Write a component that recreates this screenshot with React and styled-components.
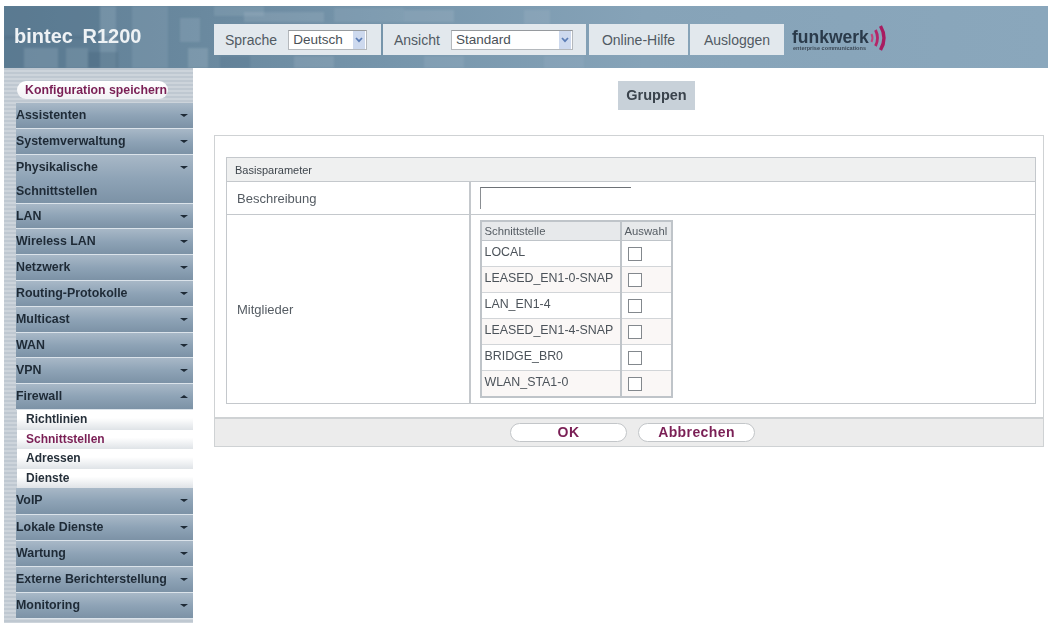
import React from "react";
import styled, { createGlobalStyle } from "styled-components";

const Global = createGlobalStyle`
  html, body { margin: 0; padding: 0; background: #fff; height: 100%; overflow: hidden; }
  body { font-family: "Liberation Sans", Arial, sans-serif; font-size: 11px; color: #333; }
`;

const Page = styled.div`
  width: 1053px;
  height: 623px;
  box-sizing: border-box;
  padding: 6px 5px 0 4px;
  display: flex;
  flex-direction: column;
  overflow: hidden;
  filter: blur(0.55px);
`;

const Header = styled.header`
  position: relative;
  height: 62px;
  flex: none;
  display: flex;
  align-items: flex-start;
  box-sizing: border-box;
  padding-top: 18px;
  overflow: hidden;
  background: linear-gradient(90deg, #5f7e95 0, #6a899f 200px, #7796ac 400px, #86a3b8 640px, #8aa7bc 100%);
`;

const Texture = styled.svg`
  position: absolute;
  left: 0;
  top: 0;
  width: 800px;
  height: 62px;
  filter: blur(1.2px);
`;

const Brand = styled.div`
  position: relative;
  width: 210px;
  flex: none;
  box-sizing: border-box;
  padding: 0 0 0 10px;
  font-size: 20px;
  font-weight: 700;
  line-height: 24px;
  color: #eef2f5;
  word-spacing: 4px;
  white-space: nowrap;
`;

const ToolGroup = styled.div`
  position: relative;
  height: 31px;
  display: flex;
  align-items: center;
  gap: ${(p) => p.$gap || 0}px;
  box-sizing: border-box;
  width: ${(p) => p.$w}px;
  margin-right: ${(p) => p.$mr || 0}px;
  padding-left: ${(p) => p.$pl || 0}px;
  justify-content: ${(p) => (p.$center ? "center" : "flex-start")};
  background: #e2e8ed;
  font-size: 14px;
  color: #515a63;
  white-space: nowrap;
`;

const SelectBox = styled.div`
  position: relative;
  width: ${(p) => p.$w}px;
  height: 20px;
  flex: none;
`;

const NativeSelect = styled.select`
  appearance: none;
  width: 100%;
  height: 100%;
  box-sizing: border-box;
  border: 1px solid #b4b8bc;
  border-top-color: #969a9e;
  background: #fff;
  padding: 0 0 0 4px;
  margin: 0;
  border-radius: 0;
  font: 13.5px "Liberation Sans", Arial, sans-serif;
  color: #4a5158;
`;

const Arrow = styled.span`
  position: absolute;
  right: 2px;
  top: 1px;
  bottom: 1px;
  width: 12px;
  background: #cdd9ee;
  display: flex;
  align-items: center;
  justify-content: center;
`;

const Logo = styled.div`
  margin-left: 8px;
  display: flex;
  align-items: center;
  height: 31px;
  position: relative;
`;

const LogoWord = styled.div`
  font-size: 17.5px;
  font-weight: 700;
  line-height: 15px;
  color: #2a3a4a;
  margin-top: -4px;
`;

const LogoTag = styled.div`
  position: absolute;
  left: 1px;
  top: 22px;
  font-size: 5.6px;
  font-weight: 700;
  line-height: 5px;
  color: #3d4a57;
  white-space: nowrap;
`;

const Body = styled.div`
  flex: 1;
  display: flex;
  min-height: 0;
`;

const Sidebar = styled.nav`
  width: 189px;
  flex: none;
  box-sizing: border-box;
  padding: 13px 0 0 12px;
  background: repeating-linear-gradient(180deg, #bfc8d1 0 2px, #cdd4db 2px 4px);
`;

const SaveButton = styled.div`
  height: 18px;
  width: 151px;
  margin: 0 0 4px 1px;
  box-sizing: border-box;
  padding-left: 8px;
  border-radius: 9px;
  background: linear-gradient(180deg, #fff, #f1f2f5);
  font-weight: 700;
  font-size: 12.3px;
  line-height: 18px;
  color: #7a1f55;
  white-space: nowrap;
`;

const MenuItem = styled.div`
  min-height: ${(p) => (p.$tall ? "26.2px" : "25.8px")};
  box-sizing: border-box;
  display: flex;
  justify-content: space-between;
  border-bottom: 1px solid #dbe3ea;
  padding: 0 5px 0 0;
  background: linear-gradient(180deg, #a8b8c7 0, #8ea3b6 50%, #7c92a6 100%);
  font-weight: 700;
  font-size: 12.4px;
  line-height: 24px;
  color: #1e2a36;
  white-space: nowrap;
`;

const MenuLabel = styled.span`
  display: block;
`;

const Caret = styled.span`
  width: 0;
  height: 0;
  margin-top: 11px;
  border-left: 4px solid transparent;
  border-right: 4px solid transparent;
  ${(p) => (p.$up ? "border-bottom: 3px solid #1e2a36;" : "border-top: 3px solid #1e2a36;")}
`;

const SubItem = styled.div`
  height: 19.6px;
  box-sizing: border-box;
  margin-left: 1px;
  padding-left: 9px;
  background: linear-gradient(180deg, #fff 0, #fff 40%, #dfe3e7 100%);
  font-weight: 700;
  font-size: 12px;
  line-height: 19px;
  color: ${(p) => (p.$active ? "#7a1f55" : "#26303a")};
`;

const Main = styled.main`
  flex: 1;
  min-width: 0;
  box-sizing: border-box;
  padding: 13px 0 0 21px;
  display: flex;
  flex-direction: column;
`;

const TabRow = styled.div`
  display: flex;
  padding-left: 404px;
`;

const Tab = styled.div`
  width: 77px;
  height: 29px;
  background: #c8d1d9;
  font-weight: 700;
  font-size: 14.5px;
  line-height: 29px;
  text-align: center;
  color: #3a434c;
`;

const Panel = styled.section`
  margin: 25px 4px 0 0;
  border: 1px solid #cfd2d4;
  display: flex;
  flex-direction: column;
`;

const PanelBody = styled.div`
  padding: 21px 7px 13px 11px;
`;

const FormTable = styled.table`
  width: 100%;
  border-collapse: collapse;
  border: 1px solid #c4c8cc;
  table-layout: fixed;
`;

const LabelCol = styled.col`
  width: 243px;
`;

const SectionCell = styled.th`
  height: 23px;
  padding: 0 0 0 8px;
  text-align: left;
  font-weight: 400;
  font-size: 11px;
  color: #3f464d;
  background: #eff0f0;
  border-bottom: 1px solid #c4c8cc;
`;

const LabelCell = styled.td`
  padding: 0 0 0 10px;
  font-size: 13px;
  color: #555c63;
  border-bottom: 1px solid #c4c8cc;
  border-right: 2px solid #c4c8cc;
  height: ${(p) => p.$h}px;
`;

const ValueCell = styled.td`
  padding: ${(p) => p.$pad};
  vertical-align: top;
  border-bottom: 1px solid #c4c8cc;
`;

const TextInput = styled.input`
  display: block;
  width: 151px;
  height: 22px;
  box-sizing: border-box;
  padding: 0;
  background: #fff;
  border: 0;
  border-top: 1px solid #6d7176;
  border-left: 1px solid #8a8e92;
`;

const MemberTable = styled.table`
  border-collapse: collapse;
  border: 2px solid #bfc4c9;
  width: 193px;
  table-layout: fixed;
`;

const MemberHead = styled.th`
  height: 18px;
  padding: 0 0 0 3px;
  text-align: left;
  font-weight: 400;
  font-size: 11.3px;
  color: #555c63;
  background: #e7e9eb;
  border-bottom: 1px solid #bfc4c9;
  border-right: ${(p) => (p.$last ? "0" : "2px solid #bfc4c9")};
  width: ${(p) => (p.$last ? "auto" : "135px")};
  white-space: nowrap;
`;

const MemberName = styled.td`
  height: 22px;
  padding: 0 0 3px 3px;
  font-size: 12.4px;
  white-space: nowrap;
  color: #4c535a;
  background: ${(p) => (p.$odd ? "#faf7f6" : "#fff")};
  border-bottom: 1px solid #d2d5d8;
  border-right: 2px solid #bfc4c9;
`;

const MemberCheck = styled.td`
  padding: 0 0 0 6px;
  background: ${(p) => (p.$odd ? "#faf7f6" : "#fff")};
  border-bottom: 1px solid #d2d5d8;
`;

const Box = styled.span`
  display: block;
  width: 14px;
  height: 14px;
  box-sizing: border-box;
  border: 1px solid #83888d;
  background: #fff;
`;

const Footer = styled.div`
  height: 29px;
  box-sizing: border-box;
  border-top: 2px solid #cfd2d4;
  background: #ececec;
  display: flex;
  justify-content: center;
  align-items: center;
  gap: 11px;
  padding-left: 7px;
`;

const PillButton = styled.button`
  width: ${(p) => p.$w}px;
  height: 19px;
  margin: 0;
  padding: 0;
  border: 1px solid #c3c6c9;
  border-radius: 10px;
  background: #fff;
  font: 700 14px "Liberation Sans", Arial, sans-serif;
  line-height: 17px;
  letter-spacing: 0.4px;
  color: #7a1f55;
`;

const menuBefore = [
  ["Assistenten"],
  ["Systemverwaltung"],
  ["Physikalische", "Schnittstellen"],
  ["LAN"],
  ["Wireless LAN"],
  ["Netzwerk"],
  ["Routing-Protokolle"],
  ["Multicast"],
  ["WAN"],
  ["VPN"],
];
const menuAfter = ["VoIP", "Lokale Dienste", "Wartung", "Externe Berichterstellung", "Monitoring"];
const subs = ["Richtlinien", "Schnittstellen", "Adressen", "Dienste"];
const members = ["LOCAL", "LEASED_EN1-0-SNAP", "LAN_EN1-4", "LEASED_EN1-4-SNAP", "BRIDGE_BR0", "WLAN_STA1-0"];

const blocks = [
  [0, 0, 96, 62, "#4f6f87", 0.3], [96, 0, 16, 62, "#9db4c4", 0.3], [128, 0, 36, 62, "#a9bccb", 0.18],
  [20, 42, 34, 20, "#9fb5c4", 0.28], [62, 42, 22, 20, "#a9bccb", 0.2], [84, 46, 30, 16, "#3f5f78", 0.28],
  [176, 12, 20, 24, "#a9bccb", 0.24], [184, 42, 20, 20, "#b3c5d2", 0.26], [210, 0, 50, 10, "#a5b9c8", 0.22],
  [240, 6, 80, 10, "#c0cfda", 0.18], [330, 2, 70, 14, "#a9bdcc", 0.2], [216, 50, 30, 12, "#4f6f87", 0.28],
  [290, 50, 40, 12, "#b3c5d2", 0.2], [400, 4, 50, 12, "#c0cfda", 0.18], [420, 50, 40, 12, "#a9bdcc", 0.2],
  [520, 4, 26, 14, "#c0cfda", 0.14], [540, 50, 40, 12, "#b3c5d2", 0.12], [0, 30, 130, 3, "#33536b", 0.15],
];

const Chevron = () => (
  <svg width="8" height="6" viewBox="0 0 8 6" aria-hidden="true">
    <path d="M1 1 L4 4.2 L7 1" fill="none" stroke="#5b7db5" strokeWidth="1.7" />
  </svg>
);

const Select = ({ w, value }) => (
  <SelectBox $w={w}>
    <NativeSelect defaultValue={value}>
      <option>{value}</option>
    </NativeSelect>
    <Arrow>
      <Chevron />
    </Arrow>
  </SelectBox>
);

export default function App() {
  return (
    <Page>
      <Global />
      <Header>
        <Texture viewBox="0 0 800 62" aria-hidden="true">
          {blocks.map(([x, y, w, h, fill, o]) => (
            <rect key={`${x}-${y}`} x={x} y={y} width={w} height={h} fill={fill} opacity={o} />
          ))}
        </Texture>
        <Brand>bintec R1200</Brand>
        <ToolGroup $w={167} $mr={2} $pl={11} $gap={11}>
          Sprache
          <Select w={79} value="Deutsch" />
        </ToolGroup>
        <ToolGroup $w={203} $mr={3} $pl={11} $gap={11}>
          Ansicht
          <Select w={122} value="Standard" />
        </ToolGroup>
        <ToolGroup $w={99} $mr={2} $center>Online-Hilfe</ToolGroup>
        <ToolGroup $w={94} $center>Ausloggen</ToolGroup>
        <Logo>
          <LogoWord>funkwerk</LogoWord>
          <LogoTag>enterprise communications</LogoTag>
          <svg width="20" height="28" viewBox="0 0 20 28" aria-hidden="true" style={{ marginTop: -3, marginLeft: 1 }}>
            <path d="M1.5 10 Q3.5 14 1.5 18" fill="none" stroke="#c0447c" strokeWidth="2" />
            <path d="M5.5 6 Q9.5 14 5.5 22" fill="none" stroke="#b42669" strokeWidth="2.8" />
            <path d="M10.5 2 Q17.5 14 10.5 26" fill="none" stroke="#a81c60" strokeWidth="3.4" />
          </svg>
        </Logo>
      </Header>
      <Body>
        <Sidebar>
          <SaveButton>Konfiguration speichern</SaveButton>
          {menuBefore.map((lines) => (
            <MenuItem key={lines[0]}>
              <div>
                {lines.map((l) => (
                  <MenuLabel key={l}>{l}</MenuLabel>
                ))}
              </div>
              <Caret />
            </MenuItem>
          ))}
          <MenuItem>
            <MenuLabel>Firewall</MenuLabel>
            <Caret $up />
          </MenuItem>
          {subs.map((s, i) => (
            <SubItem key={s} $active={i === 1}>{s}</SubItem>
          ))}
          {menuAfter.map((m) => (
            <MenuItem key={m} $tall>
              <MenuLabel>{m}</MenuLabel>
              <Caret />
            </MenuItem>
          ))}
        </Sidebar>
        <Main>
          <TabRow>
            <Tab>Gruppen</Tab>
          </TabRow>
          <Panel>
            <PanelBody>
              <FormTable>
                <colgroup>
                  <LabelCol />
                  <col />
                </colgroup>
                <thead>
                  <tr>
                    <SectionCell colSpan={2}>Basisparameter</SectionCell>
                  </tr>
                </thead>
                <tbody>
                  <tr>
                    <LabelCell $h={32}>Beschreibung</LabelCell>
                    <ValueCell $pad="5px 0 0 9px">
                      <TextInput type="text" />
                    </ValueCell>
                  </tr>
                  <tr>
                    <LabelCell $h={187}>Mitglieder</LabelCell>
                    <ValueCell $pad="5px 0 5px 9px">
                      <MemberTable>
                        <thead>
                          <tr>
                            <MemberHead>Schnittstelle</MemberHead>
                            <MemberHead $last>Auswahl</MemberHead>
                          </tr>
                        </thead>
                        <tbody>
                          {members.map((m, i) => (
                            <tr key={m}>
                              <MemberName $odd={i % 2 === 1}>{m}</MemberName>
                              <MemberCheck $odd={i % 2 === 1}>
                                <Box />
                              </MemberCheck>
                            </tr>
                          ))}
                        </tbody>
                      </MemberTable>
                    </ValueCell>
                  </tr>
                </tbody>
              </FormTable>
            </PanelBody>
            <Footer>
              <PillButton $w={117}>OK</PillButton>
              <PillButton $w={117}>Abbrechen</PillButton>
            </Footer>
          </Panel>
        </Main>
      </Body>
    </Page>
  );
}
